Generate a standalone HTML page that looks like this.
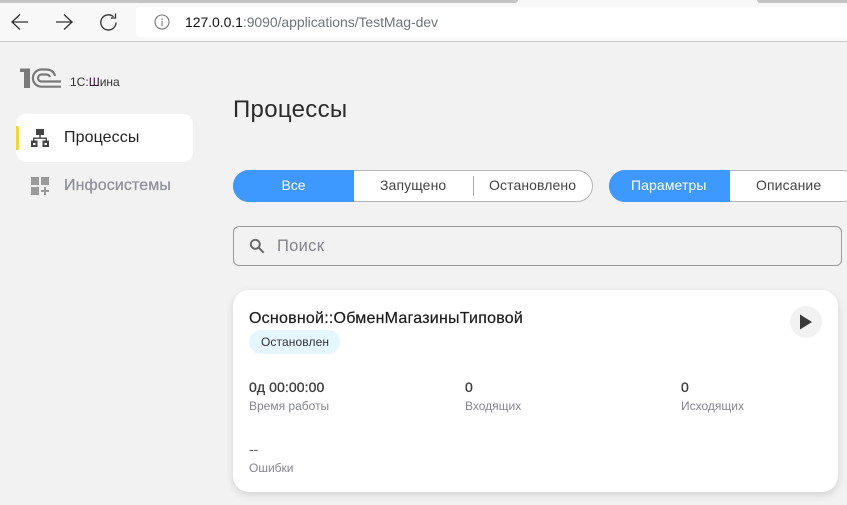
<!DOCTYPE html>
<html lang="ru"><head><meta charset="utf-8"><title>Процессы</title>
<style>
html,body{margin:0;padding:0;width:847px;height:505px;overflow:hidden;background:#f2f2f2;font-family:"Liberation Sans",sans-serif}
.a{position:absolute;white-space:nowrap;line-height:1}
svg{position:absolute;display:block}
</style></head><body>
<div class="a" style="left:0;top:0;width:847px;height:41px;background:#f8f8f8;border-bottom:1px solid #c9c9c9"></div>
<div class="a" style="left:0;top:0;width:518px;height:3px;background:#c4c4c4;border-bottom-right-radius:3px"></div>
<div class="a" style="left:757px;top:0;width:90px;height:3px;background:#c4c4c4;border-bottom-left-radius:3px"></div>
<div class="a" style="left:136px;top:7px;width:711px;height:30px;background:#fff;border-radius:4px 0 0 4px"></div>
<svg style="left:0;top:0" width="130" height="41" fill="none" stroke="#333" stroke-width="1.3">
<path d="M12 22H28M20 14.500L12 22L20 29.500"/>
<path d="M56 22H72M64 14.500L72 22L64 29.500"/>
<path d="M113.500 16.800A7.600 7.600 0 1 0 116 22.500"/><path d="M115.500 13.500V18H111"/>
</svg>
<svg style="left:154px;top:14px" width="16" height="16" fill="none" stroke="#777" stroke-width="1.1"><circle cx="8" cy="8" r="7"/><path d="M8 7V12M8 4.300V5.800"/></svg>
<div class="a" style="left:185px;top:15px;font-size:14px;letter-spacing:-.06px;color:#70757a"><span style="color:#111">127.0.0.1</span>:9090/applications/TestMag-dev</div>

<svg style="left:0;top:0" width="80" height="100" fill="none" stroke="#7a7a7a" stroke-width="2.200">
<path d="M20 68.500H30V88H24V72H20Z" fill="#7a7a7a" stroke="none"/>
<path d="M61 86.700H41.500A8.600 8.600 0 0 1 41.500 69.500H46C51 69.500 54 72 55 76"/>
<path d="M61 81.500H41.500A3.500 3.500 0 0 1 41.500 74.500H46C48 74.500 49.500 75.500 50 77"/>
</svg>
<div class="a" style="left:70px;top:76px;font-size:12px;color:#333">1С:<span style="color:#301030">Ш</span>ина</div>

<div class="a" style="left:16px;top:114px;width:177px;height:48px;background:#fff;border-radius:10px"></div>
<div class="a" style="left:16px;top:126px;width:3px;height:24px;background:#ffd800;border-radius:0 2px 2px 0"></div>
<svg style="left:31px;top:129px" width="18" height="18" fill="#444"><rect x="5" y="0" width="8" height="6"/><rect x="8.300" y="6" width="1.400" height="3"/><path d="M2 8.500H16V12H14.600V9.900H3.400V12H2Z"/><path d="M0 11.500H6.500V18H0ZM2 14H4.500V16H2Z" fill-rule="evenodd"/><path d="M11.500 11.500H18V18H11.500ZM13.500 14H16V16H13.500Z" fill-rule="evenodd"/></svg>
<div class="a" style="left:64px;top:130px;font-size:16px;color:#222;letter-spacing:.1px">Процессы</div>
<svg style="left:31px;top:177px" width="18" height="18" fill="#9a9a9a"><rect width="8" height="8"/><rect x="10" width="8" height="8"/><rect y="10" width="8" height="8"/><path d="M13 10H15V13H18V15H15V18H13V15H10V13H13Z"/></svg>
<div class="a" style="left:64px;top:178px;font-size:16px;font-weight:400;color:#91919b;letter-spacing:.1px;-webkit-text-stroke:.25px #91919b">Инфосистемы</div>

<div class="a" style="left:233px;top:98px;font-size:24px;color:#2b2b2b;letter-spacing:.3px">Процессы</div>

<div class="a" style="left:233px;top:170px;width:360px;height:32px;box-sizing:border-box;background:#fff;border:1px solid #b5b5b5;border-radius:16px"></div>
<div class="a" style="left:233px;top:170px;width:121px;height:32px;background:#3d99ff;border-radius:16px 0 0 16px"></div>
<div class="a" style="left:473px;top:176px;width:1px;height:20px;background:#aaa"></div>
<div class="a" style="left:233px;top:178px;width:121px;text-align:center;font-size:14px;color:#fff">Все</div>
<div class="a" style="left:380px;top:178px;font-size:14px;color:#444;letter-spacing:.1px">Запущено</div>
<div class="a" style="left:489px;top:178px;font-size:14px;color:#444;letter-spacing:.1px">Остановлено</div>

<div class="a" style="left:609px;top:170px;width:250px;height:32px;box-sizing:border-box;background:#fff;border:1px solid #b5b5b5;border-radius:16px"></div>
<div class="a" style="left:609px;top:170px;width:121px;height:32px;background:#3d99ff;border-radius:16px 0 0 16px"></div>
<div class="a" style="left:631px;top:178px;font-size:14px;color:#fff;letter-spacing:.1px">Параметры</div>
<div class="a" style="left:756px;top:178px;font-size:14px;color:#444;letter-spacing:.1px">Описание</div>

<div class="a" style="left:233px;top:226px;width:609px;height:40px;box-sizing:border-box;border:1px solid #9a9a9a;border-radius:6px"></div>
<svg style="left:249px;top:238px" width="16" height="16" fill="none" stroke="#666" stroke-width="1.900"><circle cx="6.300" cy="6.300" r="4.500"/><path d="M9.800 9.800L14.700 14.700"/></svg>
<div class="a" style="left:277px;top:238px;font-size:16.5px;color:#85858c;letter-spacing:.3px">Поиск</div>

<div class="a" style="left:233px;top:290px;width:605px;height:202px;background:#fff;border-radius:16px;box-shadow:0 3px 8px rgba(0,0,0,.13)"></div>
<div class="a" style="left:249px;top:311px;font-size:16px;color:#1c1c1c;letter-spacing:.23px;-webkit-text-stroke:.2px #1c1c1c">Основной::ОбменМагазиныТиповой</div>
<div class="a" style="left:249px;top:330px;width:91px;height:24px;background:#e6f6ff;border-radius:12px"></div>
<div class="a" style="left:261px;top:336px;font-size:12px;color:#333;letter-spacing:.1px">Остановлен</div>
<div class="a" style="left:790px;top:306px;width:32px;height:32px;background:#f2f2f2;border-radius:50%"></div>
<svg style="left:790px;top:306px" width="32" height="32"><path d="M10 8.500L22 16L10 23.500Z" fill="#3a3a3a"/></svg>

<div class="a" style="left:249px;top:380px;font-size:14px;color:#3a3a3a;letter-spacing:.1px;-webkit-text-stroke:.3px #3a3a3a">0д 00:00:00</div>
<div class="a" style="left:249px;top:400px;font-size:12px;color:#85858f">Время работы</div>
<div class="a" style="left:465px;top:380px;font-size:14px;color:#3a3a3a;-webkit-text-stroke:.3px #3a3a3a">0</div>
<div class="a" style="left:465px;top:400px;font-size:12px;color:#85858f">Входящих</div>
<div class="a" style="left:681px;top:380px;font-size:14px;color:#3a3a3a;-webkit-text-stroke:.3px #3a3a3a">0</div>
<div class="a" style="left:681px;top:400px;font-size:12px;color:#85858f">Исходящих</div>
<div class="a" style="left:249px;top:442px;font-size:14px;color:#666">--</div>
<div class="a" style="left:249px;top:462px;font-size:12px;color:#85858f">Ошибки</div>
</body></html>
